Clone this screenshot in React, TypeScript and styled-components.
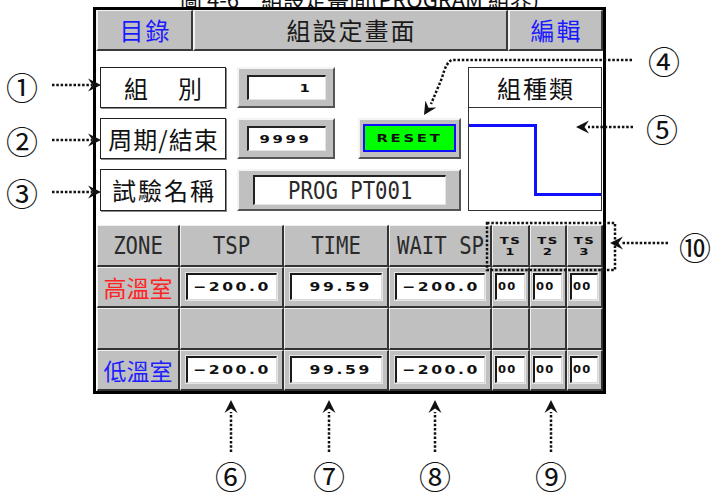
import styled, { createGlobalStyle } from "styled-components";

const CJK = `"Noto Sans CJK TC", "Noto Sans CJK JP", sans-serif`;
const MONO = `"DejaVu Sans Mono", "Liberation Mono", monospace`;
const PIXEL = `"DejaVu Sans", "Liberation Sans", sans-serif`;

const GlobalStyle = createGlobalStyle`
  html, body {
    margin: 0;
    padding: 0;
    background: #fff;
  }
  body {
    font-family: ${CJK};
  }
`;

const Page = styled.div`
  position: relative;
  width: 712px;
  height: 496px;
  overflow: hidden;
  background: #fff;
`;

const Caption = styled.div`
  height: 7px;
  overflow: hidden;
  display: flex;
  align-items: flex-end;
  padding-left: 180px;
  font: 22px/1 ${CJK};
  color: #111;
  white-space: nowrap;
`;

const CaptionText = styled.span`
  margin-bottom: -2px;
`;

const Frame = styled.div`
  margin-left: 93px;
  width: 513px;
  height: 387px;
  box-sizing: border-box;
  border: 3px solid #000;
  display: flex;
  flex-direction: column;
`;

const Header = styled.div`
  display: grid;
  grid-template-columns: 97px 315px 95px;
  height: 41px;
`;

const HeaderCell = styled.div<{ $color?: string }>`
  box-sizing: border-box;
  background: #c0c0c0;
  border-style: solid;
  border-width: 1px 2px 2px 2px;
  border-color: #f2f2f2 #3a3a3a #3a3a3a #f2f2f2;
  display: flex;
  align-items: center;
  justify-content: center;
  padding-left: 2px;
  font: 24px/1 ${CJK};
  letter-spacing: 2px;
  color: ${(p) => p.$color ?? "#1a1a1a"};
`;

const Body = styled.div`
  flex: 1;
  display: flex;
  flex-direction: column;
  padding-top: 16px;
`;

const TopSection = styled.div`
  display: flex;
  height: 144px;
  padding-left: 4px;
`;

const FormGrid = styled.div`
  display: grid;
  grid-template-columns: 126px 98px 115px;
  grid-template-rows: 41px 41px 42px;
  column-gap: 11px;
  row-gap: 10px;
`;

const LabelBox = styled.div<{ $ls: number }>`
  box-sizing: border-box;
  border: 1px solid #222;
  box-shadow: 1px 1px 0 #8a8a8a;
  display: flex;
  align-items: center;
  justify-content: center;
  padding-left: ${(p) => p.$ls}px;
  font: 24px/1 ${CJK};
  letter-spacing: ${(p) => p.$ls}px;
  color: #111;
  white-space: nowrap;
`;

const Bevel = styled.div<{ $pad: string; $span?: boolean; $end?: boolean }>`
  box-sizing: border-box;
  background: #c0c0c0;
  border-style: solid;
  border-width: 2px;
  border-color: #f4f4f4 #555 #555 #f4f4f4;
  padding: ${(p) => p.$pad};
  display: flex;
  ${(p) => (p.$span ? "grid-column: 2 / 4;" : "")}
  ${(p) => (p.$end ? "justify-self: end; width: 103px;" : "")}
`;

const WhiteField = styled.div<{ $justify?: string; $pad?: string }>`
  flex: 1;
  background: #fff;
  border-style: solid;
  border-width: 2px 1px 1px 2px;
  border-color: #222 #e4e4e4 #e4e4e4 #222;
  display: flex;
  align-items: center;
  justify-content: ${(p) => p.$justify ?? "center"};
  padding: ${(p) => p.$pad ?? "0"};
  overflow: hidden;
`;

const ResetButton = styled.div`
  flex: 1;
  background: #00ff00;
  border: 2px solid #1010ff;
  display: flex;
  align-items: center;
  justify-content: center;
`;

const Pixel = styled.span<{ $size?: number; $ls?: number; $sx?: number; $origin?: string }>`
  display: inline-block;
  font: bold ${(p) => p.$size ?? 11}px/1 ${PIXEL};
  letter-spacing: ${(p) => p.$ls ?? 2}px;
  transform: scaleX(${(p) => p.$sx ?? 1.35});
  transform-origin: ${(p) => p.$origin ?? "center"};
  color: #111;
  white-space: nowrap;
`;

const Mono = styled.span`
  display: inline-block;
  font: 24px/1 ${MONO};
  transform: scaleX(0.86);
  color: #2a2a2a;
  white-space: nowrap;
`;

const KindBox = styled.div`
  margin-left: 7px;
  width: 134px;
  box-sizing: border-box;
  border: 1px solid #333;
  display: flex;
  flex-direction: column;
`;

const KindTitle = styled.div`
  height: 39px;
  border-bottom: 1px solid #333;
  display: flex;
  align-items: center;
  justify-content: center;
  padding-left: 2px;
  font: 24px/1 ${CJK};
  letter-spacing: 2px;
  color: #111;
`;

const KindGraph = styled.svg`
  flex: 1;
  width: 132px;
  display: block;
`;

const Table = styled.div`
  margin: 14px 0 0 1px;
  display: grid;
  grid-template-columns: 83px 104px 105px 103px 38px 37px 36px;
  grid-template-rows: 42px 41px 42px 41px;
`;

const Cell = styled.div<{ $pad?: string }>`
  box-sizing: border-box;
  background: #c0c0c0;
  border-style: solid;
  border-width: 1px 2px 2px 1px;
  border-color: #f0f0f0 #333 #333 #f0f0f0;
  display: flex;
  flex-direction: column;
  align-items: stretch;
  justify-content: center;
  text-align: center;
  padding: ${(p) => p.$pad ?? "0"};
`;

const ZoneName = styled.span<{ $color: string }>`
  font: 23px/1 ${CJK};
  color: ${(p) => p.$color};
`;

const TsHead = styled.span`
  display: inline-block;
  font: bold 9.5px/11px ${PIXEL};
  letter-spacing: 1px;
  transform: scaleX(1.4);
  color: #111;
`;

const Field = styled.div<{ $justify?: string; $pad?: string }>`
  flex: 1;
  background: #fff;
  border-style: solid;
  border-width: 2px 1px 1px 2px;
  border-color: #1a1a1a #d8d8d8 #d8d8d8 #1a1a1a;
  box-shadow: 0 0 0 1px #e6e6e6;
  display: flex;
  align-items: center;
  justify-content: ${(p) => p.$justify ?? "flex-start"};
  padding: ${(p) => p.$pad ?? "0 5px"};
  overflow: hidden;
`;

const Overlay = styled.svg`
  position: absolute;
  left: 0;
  top: 0;
  width: 712px;
  height: 496px;
  pointer-events: none;
`;

const Dots = styled.path`
  fill: none;
  stroke: #111;
  stroke-width: 2.5;
  stroke-dasharray: 2.5 1.8;
`;

const Head = styled.path`
  fill: #111;
`;

const Mark = styled.span<{ $x: number; $y: number }>`
  position: absolute;
  left: ${(p) => p.$x}px;
  top: ${(p) => p.$y}px;
  transform: translate(-50%, -50%);
  font: 32px/1 "Noto Sans CJK JP", sans-serif;
  color: #111;
`;

const marks = [
  { t: "①", x: 22, y: 86 },
  { t: "②", x: 22, y: 140 },
  { t: "③", x: 22, y: 192 },
  { t: "④", x: 664, y: 60 },
  { t: "⑤", x: 662, y: 128 },
  { t: "⑩", x: 695, y: 246 },
  { t: "⑥", x: 231, y: 475 },
  { t: "⑦", x: 329, y: 475 },
  { t: "⑧", x: 435, y: 475 },
  { t: "⑨", x: 551, y: 475 },
];

const arrow = "M0 0 L-13 -6.5 L-8.5 0 L-13 6.5 Z";

const zones = [
  { name: "高溫室", color: "#ff2424", filled: true },
  { name: "", color: "#000", filled: false },
  { name: "低溫室", color: "#2020ff", filled: true },
];

function Num({ v, origin }: { v: string; origin: string }) {
  return (
    <Pixel $size={12} $ls={2} $sx={1.3} $origin={origin}>
      {v}
    </Pixel>
  );
}

export default function App() {
  return (
    <>
      <GlobalStyle />
      <Page>
        <Caption>
          <CaptionText>圖 4-6　組設定畫面(PROGRAM 組界)</CaptionText>
        </Caption>
        <Frame>
          <Header>
            <HeaderCell $color="#1a1aff">目錄</HeaderCell>
            <HeaderCell>組設定畫面</HeaderCell>
            <HeaderCell $color="#1a1aff">編輯</HeaderCell>
          </Header>
          <Body>
            <TopSection>
              <FormGrid>
                <LabelBox $ls={3}>組　別</LabelBox>
                <Bevel $pad="6px 7px 6px 8px">
                  <WhiteField $justify="flex-end" $pad="0 12px 0 0">
                    <Pixel $origin="right">1</Pixel>
                  </WhiteField>
                </Bevel>
                <div />
                <LabelBox $ls={1}>周期/結束</LabelBox>
                <Bevel $pad="6px 7px 6px 8px">
                  <WhiteField $justify="flex-end" $pad="0 13px 0 0">
                    <Pixel $origin="right">9999</Pixel>
                  </WhiteField>
                </Bevel>
                <Bevel $pad="4px 3px 5px 3px" $end>
                  <ResetButton>
                    <Pixel $origin="center">RESET</Pixel>
                  </ResetButton>
                </Bevel>
                <LabelBox $ls={2}>試驗名稱</LabelBox>
                <Bevel $pad="4px 13px 4px 14px" $span>
                  <WhiteField>
                    <Mono>PROG PT001</Mono>
                  </WhiteField>
                </Bevel>
              </FormGrid>
              <KindBox>
                <KindTitle>組種類</KindTitle>
                <KindGraph viewBox="0 0 132 102">
                  <path d="M0 17.5 H66.5 V86.5 H132" fill="none" stroke="#1010ff" strokeWidth="3" />
                </KindGraph>
              </KindBox>
            </TopSection>
            <Table>
              <Cell><Mono>ZONE</Mono></Cell>
              <Cell><Mono>TSP</Mono></Cell>
              <Cell><Mono>TIME</Mono></Cell>
              <Cell><Mono>WAIT SP</Mono></Cell>
              {["1", "2", "3"].map((n) => (
                <Cell key={n}>
                  <TsHead>TS</TsHead>
                  <TsHead>{n}</TsHead>
                </Cell>
              ))}
              {zones.map((z, i) =>
                z.filled ? (
                  [
                    <Cell key={`${i}z`}><ZoneName $color={z.color}>{z.name}</ZoneName></Cell>,
                    <Cell key={`${i}a`} $pad="5px 5px 6px 5px">
                      <Field><Num v="−200.0" origin="left" /></Field>
                    </Cell>,
                    <Cell key={`${i}b`} $pad="5px 5px 6px 5px">
                      <Field $justify="flex-end" $pad="0 9px 0 0"><Num v="99.59" origin="right" /></Field>
                    </Cell>,
                    <Cell key={`${i}c`} $pad="5px 5px 6px 5px">
                      <Field><Num v="−200.0" origin="left" /></Field>
                    </Cell>,
                    ...[0, 1, 2].map((k) => (
                      <Cell key={`${i}t${k}`} $pad="5px 3px 6px 2px">
                        <Field $pad="0 1px">
                          <Pixel $size={10} $ls={1} $sx={1.15} $origin="left">00</Pixel>
                        </Field>
                      </Cell>
                    )),
                  ]
                ) : (
                  [0, 1, 2, 3, 4, 5, 6].map((k) => <Cell key={`${i}e${k}`} />)
                )
              )}
            </Table>
          </Body>
        </Frame>

        <Overlay viewBox="0 0 712 496">
          {[85, 140, 192].map((y) => (
            <g key={y}>
              <Dots d={`M52 ${y} H92`} />
              <Head d={arrow} transform={`translate(101 ${y})`} />
            </g>
          ))}
          <Dots d="M632 60 H452 Q446 62 442 78 L431 104" />
          <Head d={arrow} transform="translate(424 115) rotate(122)" />
          <Dots d="M633 127 H588" />
          <Head d={arrow} transform="translate(576 127) rotate(180)" />
          <Dots d="M668 243 H622" />
          <Head d={arrow} transform="translate(610 243) rotate(180)" />
          <Dots d="M487 223 H615 V270 H487 Z" />
          {[231, 329, 435, 551].map((x) => (
            <g key={x}>
              <Dots d={`M${x} 452 V412`} />
              <Head d={arrow} transform={`translate(${x} 400) rotate(-90)`} />
            </g>
          ))}
        </Overlay>
        {marks.map((m) => (
          <Mark key={m.t} $x={m.x} $y={m.y}>
            {m.t}
          </Mark>
        ))}
      </Page>
    </>
  );
}
